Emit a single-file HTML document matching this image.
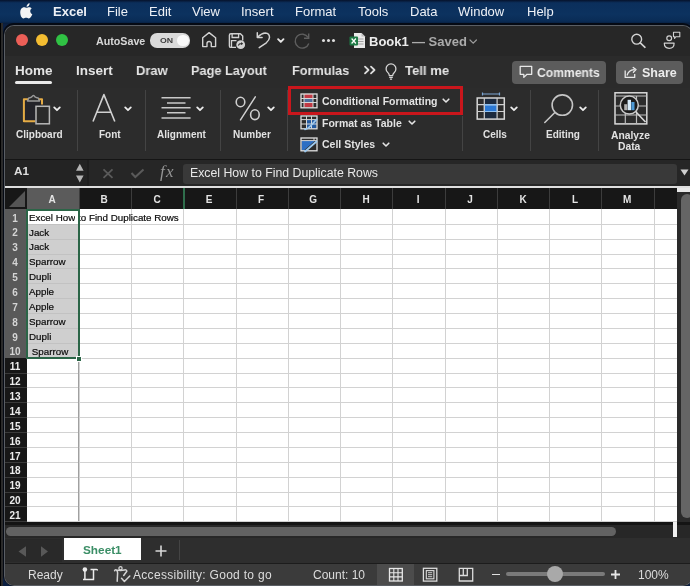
<!DOCTYPE html><html><head><meta charset="utf-8"><style>
*{margin:0;padding:0;box-sizing:border-box}
html,body{width:690px;height:586px;overflow:hidden;background:#0b1f42}
body{position:relative;font-family:"Liberation Sans",sans-serif;color:#e6e6e6}
.a{position:absolute}
.t{position:absolute;white-space:nowrap;line-height:1;will-change:transform}
svg{position:absolute;overflow:visible}
#menubar{left:0;top:0;width:690px;height:24px;background:linear-gradient(#06122b,#0b2f5c 12%,#0c325f 60%,#0a2c56 88%,#081b38)}
#menubar span{will-change:transform;position:absolute;top:5px;font-size:13px;color:#eef1f6;white-space:nowrap;line-height:1}
.tab{font-size:13.5px;font-weight:bold;color:#e4e4e4;top:63.5px}
.rl{font-size:10px;font-weight:bold;color:#e2e2e2;top:130px}
.colh{top:195px;font-size:10px;font-weight:bold;color:#e4e4e4;text-align:center}
.rowh{left:4px;width:22px;font-size:10px;font-weight:bold;color:#e8e8e8;text-align:center;line-height:14.85px;height:14.85px}
.cell{font-size:9.8px;color:#0a0a0a;-webkit-text-stroke:0.2px #0a0a0a;line-height:14.85px;height:14.85px;left:29px}
.st{font-size:12px;color:#dcdcdc;top:569px}
</style></head><body>
<div id="menubar" class="a">
<svg style="left:20.8px;top:2.8px" width="12.6" height="15.6" viewBox="0 0 14 17" preserveAspectRatio="none"><path d="M9.6 0.4c0.1 1-0.3 2-0.9 2.7-0.6 0.7-1.6 1.2-2.5 1.1-0.1-1 0.4-2 1-2.6 0.6-0.7 1.6-1.2 2.4-1.2zM12.6 12.3c-0.4 0.9-0.6 1.3-1.1 2.1-0.7 1.1-1.7 2.4-2.9 2.4-1.1 0-1.4-0.7-2.9-0.7-1.5 0-1.8 0.7-2.9 0.7-1.2 0-2.2-1.2-2.9-2.3C-1.1 11.4-1.3 7.8 0.5 6 1.2 5.1 2.3 4.5 3.4 4.5c1.2 0 1.9 0.7 2.9 0.7 0.9 0 1.5-0.7 2.9-0.7 1 0 2 0.5 2.7 1.4-2.4 1.300-2 4.800 0.700 6.400z" fill="#f4f4f4"/></svg>
<span style="left:53px;font-weight:bold">Excel</span>
<span style="left:107px">File</span>
<span style="left:148.5px">Edit</span>
<span style="left:192px">View</span>
<span style="left:241px">Insert</span>
<span style="left:295px">Format</span>
<span style="left:358px">Tools</span>
<span style="left:410px">Data</span>
<span style="left:458px">Window</span>
<span style="left:527px">Help</span>
</div>
<div class="a" style="left:0;top:23px;width:3px;height:563px;background:#2a2a2a;border-left:1px solid #000"></div>
<div class="a" style="left:3px;top:23px;width:691px;height:563px;border-radius:11px;background:#050a14"></div>
<div class="a" style="left:4px;top:24.5px;width:689px;height:561.5px;border-radius:10px;background:#5a5e64"></div>
<div class="a" style="left:5px;top:26px;width:687px;height:559px;border-radius:9px;background:#2b2b2b;overflow:hidden">
<div class="a" style="left:-5px;top:-26px;width:690px;height:586px">
<div class="a" style="left:0;top:25px;width:690px;height:30.5px;background:#272727"></div>
<div class="a" style="left:0;top:55.5px;width:690px;height:33px;background:#2b2b2b"></div>
<div class="a" style="left:16px;top:34px;width:12px;height:12px;border-radius:50%;background:#ec5f57"></div>
<div class="a" style="left:36px;top:34px;width:12px;height:12px;border-radius:50%;background:#f4bd31"></div>
<div class="a" style="left:56px;top:34px;width:12px;height:12px;border-radius:50%;background:#30c244"></div>
<div class="t" style="left:95.5px;top:35.8px;font-size:10.7px;font-weight:bold;color:#d8d8d8">AutoSave</div>
<div class="a" style="left:149.8px;top:33.4px;width:39.8px;height:14.2px;border-radius:7.1px;background:#dadada"></div>
<div class="t" style="left:159.5px;top:37.3px;font-size:7.6px;font-weight:bold;color:#3c3c3c;transform:scaleX(1.15);transform-origin:left">ON</div>
<div class="a" style="left:177.2px;top:34.6px;width:11.8px;height:11.8px;border-radius:50%;background:#f9f9f9"></div>
<svg style="left:198px;top:29px" width="22" height="21" viewBox="0 0 22 21"><path d="M4.7 8.8 L11.1 3.6 L17.6 8.8 V17.6 H13.3 V14.6 A2.15 2.15 0 0 0 9 14.6 V17.6 H4.7 Z" fill="none" stroke="#d2d2d2" stroke-width="1.4" stroke-linejoin="round"/></svg>
<svg style="left:226px;top:30px" width="22" height="20" viewBox="0 0 22 20"><path d="M10 17.4 H4.9 Q3.4 17.4 3.4 15.9 V5.25 Q3.4 3.75 4.9 3.75 H14.4 L16.7 6 V10.5" fill="none" stroke="#d2d2d2" stroke-width="1.4" stroke-linejoin="round"/><path d="M6.1 3.8 V7.5 H12.6 V3.8 M5.5 17.3 V10.6 H10.5" fill="none" stroke="#d2d2d2" stroke-width="1.3"/><circle cx="14.7" cy="14.7" r="4.4" fill="#d2d2d2"/><path d="M12.3 15.5 Q13.2 13.3 15.8 13.6 M15.2 12.6 L16.3 13.7 L15 14.6" fill="none" stroke="#2b2b2b" stroke-width="1.1"/></svg>
<svg style="left:252px;top:29px" width="22" height="22" viewBox="0 0 22 22"><path d="M5.3 3.8 V8.5 H10.1" fill="none" stroke="#d2d2d2" stroke-width="1.5" stroke-linecap="round" stroke-linejoin="round"/><path d="M5.8 8 Q9.5 4 13.3 3.9 Q17.6 4.2 17.5 8.5 Q17.3 11.2 14.3 13.8 L7.2 18.6" fill="none" stroke="#d2d2d2" stroke-width="1.5" stroke-linecap="round"/></svg>
<svg style="left:277.3px;top:38.2px" width="8" height="6" viewBox="0 0 8 6"><path d="M1.1 1.2 L3.8 3.9 L6.5 1.2" fill="none" stroke="#e6e6e6" stroke-width="1.9" stroke-linecap="round" stroke-linejoin="round"/></svg>
<svg style="left:293px;top:31.5px" width="18" height="18" viewBox="0 0 18 18"><path d="M15.2 5.5 A7 7 0 1 0 15.8 11.5" fill="none" stroke="#5e5e5e" stroke-width="1.4"/><path d="M15.7 1.5 V6.2 H11" fill="none" stroke="#5e5e5e" stroke-width="1.4"/></svg>
<div class="a" style="left:322.1px;top:38.5px;width:3.4px;height:3.4px;border-radius:50%;background:#dedede"></div>
<div class="a" style="left:326.90000000000003px;top:38.5px;width:3.4px;height:3.4px;border-radius:50%;background:#dedede"></div>
<div class="a" style="left:331.7px;top:38.5px;width:3.4px;height:3.4px;border-radius:50%;background:#dedede"></div>
<svg style="left:348.5px;top:31.5px" width="17" height="17" viewBox="0 0 17 17"><path d="M5 1 H12.5 L16 4.5 V16 H5 Z" fill="#e9e9e9"/><path d="M12.5 1 V4.5 H16" fill="#bdbdbd"/><path d="M9 7 H14.5 M9 9.5 H14.5 M9 12 H14.5" stroke="#9a9a9a" stroke-width="0.9"/><rect x="0.5" y="4.5" width="8.5" height="9" rx="1" fill="#1e7a45"/><path d="M2.6 6.5 L6.9 11.5 M6.9 6.5 L2.6 11.5" stroke="#fff" stroke-width="1.2"/></svg>
<div class="t" style="left:369px;top:34.5px;font-size:13px;font-weight:bold;color:#ececec">Book1</div>
<div class="t" style="left:412px;top:34.5px;font-size:13px;font-weight:bold;color:#ababab">— Saved</div>
<svg style="left:469px;top:39px" width="9" height="6" viewBox="0 0 9 6"><path d="M1 1 L4.2 4.2 L7.4 1" fill="none" stroke="#9a9a9a" stroke-width="1.2" stroke-linecap="round"/></svg>
<svg style="left:630px;top:32px" width="17" height="17" viewBox="0 0 17 17"><circle cx="6.7" cy="7.2" r="4.9" fill="none" stroke="#d2d2d2" stroke-width="1.4"/><path d="M10.3 10.8 L15 15.3" stroke="#d2d2d2" stroke-width="1.6" stroke-linecap="round"/></svg>
<svg style="left:663px;top:31px" width="19" height="19" viewBox="0 0 19 19"><circle cx="6.2" cy="7.2" r="2.4" fill="none" stroke="#d2d2d2" stroke-width="1.2"/><path d="M1.3 12.2 H11.1 Q11.1 17.3 6.2 17.3 Q1.3 17.3 1.3 12.2 Z" fill="none" stroke="#d2d2d2" stroke-width="1.2" stroke-linejoin="round"/><path d="M10.5 1.2 H16.8 V5.8 H12.8 L11.6 7.5 L11.6 5.8 H10.5 Z" fill="none" stroke="#d2d2d2" stroke-width="1.1" stroke-linejoin="round"/></svg>
<div class="t tab" style="left:15px">Home</div>
<div class="a" style="left:15px;top:80.5px;width:37px;height:3px;border-radius:2px;background:#e8e8e8"></div>
<div class="t tab" style="left:75.5px">Insert</div>
<div class="t tab" style="left:135.8px;transform:scaleX(0.96);transform-origin:left">Draw</div>
<div class="t tab" style="left:191.2px;transform:scaleX(0.944);transform-origin:left">Page Layout</div>
<div class="t tab" style="left:291.5px;transform:scaleX(0.942);transform-origin:left">Formulas</div>
<div class="t tab" style="left:405px;transform:scaleX(0.97);transform-origin:left">Tell me</div>
<div class="a" style="left:511.5px;top:60.5px;width:94.5px;height:23px;border-radius:4px;background:#5c5c5c"></div>
<div class="t tab" style="left:537px;top:67px;font-size:12.5px;color:#ececec;transform:scaleX(0.97);transform-origin:left">Comments</div>
<div class="a" style="left:615.5px;top:60.5px;width:67px;height:23px;border-radius:4px;background:#5c5c5c"></div>
<div class="t tab" style="left:642px;top:67px;font-size:12.5px;color:#ececec">Share</div>
<svg style="left:362px;top:64px" width="16" height="12" viewBox="0 0 16 12"><path d="M3 2.6 L6.5 6 L3 9.4 M9 2.6 L12.5 6 L9 9.4" fill="none" stroke="#dcdcdc" stroke-width="1.8" stroke-linecap="round" stroke-linejoin="round"/></svg>
<svg style="left:384px;top:63.5px" width="14" height="17" viewBox="0 0 14 17"><path d="M5.3 11.6 Q5.3 9.9 3.7 8.4 A4.9 4.9 0 1 1 10.3 8.4 Q8.7 9.9 8.7 11.6 Z" fill="none" stroke="#d6d6d6" stroke-width="1.3" stroke-linejoin="round"/><path d="M5.2 13.3 H8.8 M5.9 15.2 H8.1" stroke="#d6d6d6" stroke-width="1.3"/></svg>
<svg style="left:518px;top:64px" width="16" height="16" viewBox="0 0 16 16"><path d="M2.2 2.3 H13.7 V10.3 H9 L5.8 13.4 V10.3 H2.2 Z" fill="none" stroke="#e8e8e8" stroke-width="1.3" stroke-linejoin="round"/></svg>
<svg style="left:622px;top:64px" width="17" height="16" viewBox="0 0 17 16"><path d="M3.2 6.5 V13.4 H12.7 V10" fill="none" stroke="#e8e8e8" stroke-width="1.3" stroke-linejoin="round"/><path d="M5.2 11 Q6.5 6.2 12.2 5.6" fill="none" stroke="#e8e8e8" stroke-width="1.3" stroke-linecap="round"/><path d="M11.2 3.4 L14 5.6 L11.4 8.2" fill="none" stroke="#e8e8e8" stroke-width="1.3" stroke-linecap="round" stroke-linejoin="round"/></svg>
<div class="a" style="left:0;top:88px;width:690px;height:70.5px;background:#2c2c2c"></div>
<div class="a" style="left:0;top:158.5px;width:690px;height:1.5px;background:#151515"></div>
<div class="a" style="left:462.3px;top:116px;width:1px;height:35px;background:#444"></div>
<div class="a" style="left:76.5px;top:90px;width:1px;height:61px;background:#444"></div>
<div class="a" style="left:144.7px;top:90px;width:1px;height:61px;background:#444"></div>
<div class="a" style="left:219.6px;top:90px;width:1px;height:61px;background:#444"></div>
<div class="a" style="left:287px;top:90px;width:1px;height:61px;background:#444"></div>
<div class="a" style="left:530px;top:90px;width:1px;height:61px;background:#444"></div>
<div class="a" style="left:598.3px;top:90px;width:1px;height:61px;background:#444"></div>
<div class="t rl" style="left:16px">Clipboard</div>
<div class="t rl" style="left:99px">Font</div>
<div class="t rl" style="left:157px">Alignment</div>
<div class="t rl" style="left:233px">Number</div>
<div class="t rl" style="left:483px">Cells</div>
<div class="t rl" style="left:546px">Editing</div>
<div class="t rl" style="left:611px;top:130.5px;font-size:10.3px">Analyze</div>
<div class="t rl" style="left:618px;top:142px;font-size:10.3px">Data</div>
<div class="t" style="left:322px;top:96px;font-size:10.5px;font-weight:bold;color:#e2e2e2">Conditional Formatting</div>
<div class="t" style="left:322px;top:117.5px;font-size:10.5px;font-weight:bold;color:#e2e2e2">Format as Table</div>
<div class="t" style="left:322px;top:139px;font-size:10.5px;font-weight:bold;color:#e2e2e2">Cell Styles</div>
<svg style="left:53.2px;top:105.8px" width="8" height="7" viewBox="0 0 8 7"><path d="M1.2 1.4 L4 4.2 L6.8 1.4" fill="none" stroke="#ececec" stroke-width="1.8" stroke-linecap="round" stroke-linejoin="round"/></svg>
<svg style="left:124.2px;top:105.8px" width="8" height="7" viewBox="0 0 8 7"><path d="M1.2 1.4 L4 4.2 L6.8 1.4" fill="none" stroke="#ececec" stroke-width="1.8" stroke-linecap="round" stroke-linejoin="round"/></svg>
<svg style="left:195.5px;top:105.8px" width="8" height="7" viewBox="0 0 8 7"><path d="M1.2 1.4 L4 4.2 L6.8 1.4" fill="none" stroke="#ececec" stroke-width="1.8" stroke-linecap="round" stroke-linejoin="round"/></svg>
<svg style="left:267.4px;top:105.8px" width="8" height="7" viewBox="0 0 8 7"><path d="M1.2 1.4 L4 4.2 L6.8 1.4" fill="none" stroke="#ececec" stroke-width="1.8" stroke-linecap="round" stroke-linejoin="round"/></svg>
<svg style="left:510.2px;top:105.8px" width="8" height="7" viewBox="0 0 8 7"><path d="M1.2 1.4 L4 4.2 L6.8 1.4" fill="none" stroke="#ececec" stroke-width="1.8" stroke-linecap="round" stroke-linejoin="round"/></svg>
<svg style="left:578.6px;top:105.8px" width="8" height="7" viewBox="0 0 8 7"><path d="M1.2 1.4 L4 4.2 L6.8 1.4" fill="none" stroke="#ececec" stroke-width="1.8" stroke-linecap="round" stroke-linejoin="round"/></svg>
<svg style="left:20px;top:92px" width="32" height="34" viewBox="0 0 32 34"><path d="M15.3 29.3 H3.9 V7.3 H22 V12.5" fill="#24242a" stroke="#e5ac45" stroke-width="2" stroke-linejoin="round"/><path d="M7.5 9 L8.8 6 Q10.5 5.6 11.8 4.8 Q13.5 2.3 15 4.8 Q16.3 5.6 18.2 6 L19.5 9 Z" fill="#2c2c2c" stroke="#9a9a9a" stroke-width="1.4" stroke-linejoin="round"/><rect x="16" y="14.3" width="13.4" height="17.5" fill="#2a2a2a" stroke="#b8b8b8" stroke-width="1.5"/></svg>
<svg style="left:90px;top:92px" width="28" height="32" viewBox="0 0 28 32"><path d="M3 29.5 L13.9 2.6 L24.8 29.5 M7 20.2 H20.8" fill="none" stroke="#d0d0d0" stroke-width="1.6" stroke-linejoin="round"/></svg>
<svg style="left:160px;top:95px" width="33" height="26" viewBox="0 0 33 26"><path d="M1.5 2.8 H30.6 M7 7.9 H25.5 M1.5 12.7 H30.6 M7 17.8 H25.5 M1.5 23 H30.6" stroke="#c8c8c8" stroke-width="1.5"/></svg>
<svg style="left:232px;top:94px" width="30" height="30" viewBox="0 0 30 30"><ellipse cx="8.5" cy="8" rx="4.3" ry="4.7" fill="none" stroke="#cfcfcf" stroke-width="1.6"/><ellipse cx="22.9" cy="20.7" rx="4.3" ry="4.9" fill="none" stroke="#cfcfcf" stroke-width="1.6"/><path d="M23.3 2.8 L8.5 25.9" stroke="#cfcfcf" stroke-width="1.5" stroke-linecap="round"/></svg>
<svg style="left:300px;top:93px" width="18" height="16" viewBox="0 0 18 16"><rect x="4" y="1" width="9" height="4.5" fill="#c23a45"/><rect x="4" y="5.5" width="9" height="4" fill="#4d6d9c"/><rect x="4" y="9.5" width="9" height="4.5" fill="#c23a45"/><rect x="1" y="1" width="16" height="13.8" fill="none" stroke="#e0e0e0" stroke-width="1.3"/><path d="M4 1 V14.8 M13 1 V14.8 M1 5.5 H17 M1 9.5 H17" stroke="#d6d6d6" stroke-width="1"/></svg>
<svg style="left:300px;top:115px" width="18" height="16" viewBox="0 0 18 16"><rect x="6.5" y="5" width="10" height="8.7" fill="#235aa0"/><rect x="1" y="1" width="16" height="12.8" fill="none" stroke="#e0e0e0" stroke-width="1.3"/><path d="M6.5 1 V13.8 M11.5 1 V13.8 M1 4.6 H17 M1 9 H17" stroke="#d6d6d6" stroke-width="1"/><path d="M5 14.3 Q8 14 10.5 11 L16.5 4.5" fill="none" stroke="#9cc8ee" stroke-width="1.8" stroke-linecap="round"/></svg>
<svg style="left:300px;top:137px" width="18" height="16" viewBox="0 0 18 16"><path d="M1.7 3.8 H15 L3.8 13.4 H1.7 Z" fill="#2d6fc4"/><rect x="1" y="1" width="16" height="12.8" fill="none" stroke="#e0e0e0" stroke-width="1.3"/><path d="M1 3.6 H17 M14 1 V3.6" stroke="#d6d6d6" stroke-width="1"/><path d="M5 14.5 L16.5 4.5" fill="none" stroke="#9cc8ee" stroke-width="1.8" stroke-linecap="round"/></svg>
<svg style="left:442.3px;top:98.3px" width="8" height="6" viewBox="0 0 8 6"><path d="M1.2 1.2 L4 4 L6.8 1.2" fill="none" stroke="#e4e4e4" stroke-width="1.6" stroke-linecap="round" stroke-linejoin="round"/></svg>
<svg style="left:407.8px;top:120px" width="8" height="6" viewBox="0 0 8 6"><path d="M1.2 1.2 L4 4 L6.8 1.2" fill="none" stroke="#e4e4e4" stroke-width="1.6" stroke-linecap="round" stroke-linejoin="round"/></svg>
<svg style="left:381.5px;top:141.6px" width="8" height="6" viewBox="0 0 8 6"><path d="M1.2 1.2 L4 4 L6.8 1.2" fill="none" stroke="#e4e4e4" stroke-width="1.6" stroke-linecap="round" stroke-linejoin="round"/></svg>
<svg style="left:475px;top:91px" width="32" height="30" viewBox="0 0 32 30"><rect x="9.3" y="7" width="12.8" height="21" fill="#1b2a3e"/><rect x="9.3" y="13.7" width="13" height="6.8" fill="#2a78d4" stroke="#8fc0f0" stroke-width="1"/><path d="M7.5 3 H24.5 M7.5 1.5 V4.5 M24.5 1.5 V4.5" stroke="#7da6d4" stroke-width="1.2"/><rect x="2.2" y="7" width="27.1" height="21.1" fill="none" stroke="#d8d8d8" stroke-width="1.5"/><path d="M9.3 7 V28.1 M22.1 7 V28.1 M2.2 13.7 H29.3 M2.2 20.5 H29.3" stroke="#cfcfcf" stroke-width="1.2"/><path d="M9.3 13.7 H22.1 M9.3 20.5 H22.1" stroke="#8fc0f0" stroke-width="1.2"/></svg>
<svg style="left:542px;top:92px" width="34" height="34" viewBox="0 0 34 34"><circle cx="20.3" cy="13.1" r="10.2" fill="none" stroke="#c4c4c4" stroke-width="1.6"/><path d="M12.6 20.7 L2.8 30.5" stroke="#c4c4c4" stroke-width="1.6" stroke-linecap="round"/></svg>
<svg style="left:613px;top:91px" width="36" height="35" viewBox="0 0 36 35"><rect x="2" y="1.8" width="31.8" height="31.1" fill="none" stroke="#dadada" stroke-width="1.5"/><path d="M2 5 H33.8 M2 15 H33.8 M2 24 H33.8 M12.3 5 V33 M23.5 5 V33" stroke="#bdbdbd" stroke-width="1.2"/><path d="M23 21 L32.5 31" stroke="#dadada" stroke-width="1.6"/><circle cx="16.3" cy="14.1" r="9" fill="#1c1c1c" stroke="#c8c8c8" stroke-width="1.5"/><rect x="11.2" y="13.2" width="3" height="6" fill="#b0b0b0"/><rect x="14.6" y="8.8" width="3.4" height="10.4" fill="#d8ecfa"/><rect x="18.3" y="11" width="3.2" height="8.2" fill="#4d9ad6"/></svg>
<div class="a" style="left:287.6px;top:85.8px;width:175.6px;height:29.3px;border:3.5px solid #c9161c"></div>
<div class="a" style="left:0;top:160px;width:690px;height:25.5px;background:#262626"></div>
<div class="a" style="left:0;top:160px;width:87px;height:25.5px;background:#232323"></div>
<div class="a" style="left:87px;top:160px;width:1.5px;height:25.5px;background:#1e1e1e"></div>
<div class="t" style="left:14px;top:166.4px;font-size:11.8px;font-weight:bold;color:#dedede">A1</div>
<div class="a" style="left:183px;top:163.5px;width:494px;height:20.5px;border-radius:3px;background:#393939"></div>
<div class="t" style="left:189.5px;top:166.5px;font-size:12.3px;color:#e8e8e8">Excel How to Find Duplicate Rows</div>
<svg style="left:75px;top:162px" width="10" height="22" viewBox="0 0 10 22"><path d="M1 8.7 L4.8 1.7 L8.6 8.7 Z M1 13.4 L8.6 13.4 L4.8 20.4 Z" fill="#b4b4b4"/></svg>
<svg style="left:102px;top:167.5px" width="12" height="11" viewBox="0 0 12 11"><path d="M1.5 1.3 L10.5 9.8 M10.5 1.3 L1.5 9.8" stroke="#5a5a5a" stroke-width="1.8"/></svg>
<svg style="left:129.5px;top:167.5px" width="15" height="11" viewBox="0 0 15 11"><path d="M1.5 5 L5.3 9 L13.5 1.5" fill="none" stroke="#5a5a5a" stroke-width="2"/></svg>
<div class="t" style="left:160px;top:163.2px;font-family:'Liberation Serif',serif;font-style:italic;font-size:17px;letter-spacing:1.2px;color:#959595">fx</div>
<svg style="left:680px;top:169px" width="9" height="7" viewBox="0 0 9 7"><path d="M0.5 0.5 H8.5 L4.5 6.5 Z" fill="#d0d0d0"/></svg>
<div class="a" style="left:0;top:185.5px;width:690px;height:2.5px;background:#dedede"></div>
<div class="a" style="left:5px;top:188px;width:672px;height:20.7px;background:#171717"></div>
<svg style="left:5px;top:188px" width="22" height="21"><polygon points="20,3 20,19 4,19" fill="#555"/></svg>
<div class="a" style="left:26.9px;top:188px;width:52.3px;height:20.7px;background:#5b5b5b"></div>
<div class="t colh" style="left:26.1px;width:52.3px">A</div>
<div class="t colh" style="left:78.4px;width:52.3px">B</div>
<div class="a" style="left:78.7px;top:188px;width:1px;height:20.7px;background:#3c3c3c"></div>
<div class="t colh" style="left:130.6px;width:52.3px">C</div>
<div class="a" style="left:130.9px;top:188px;width:1px;height:20.7px;background:#3c3c3c"></div>
<div class="t colh" style="left:182.9px;width:52.3px">E</div>
<div class="a" style="left:182.7px;top:188px;width:2px;height:20.7px;background:#2f6e4c"></div>
<div class="t colh" style="left:235.2px;width:52.3px">F</div>
<div class="a" style="left:235.5px;top:188px;width:1px;height:20.7px;background:#3c3c3c"></div>
<div class="t colh" style="left:287.4px;width:52.3px">G</div>
<div class="a" style="left:287.8px;top:188px;width:1px;height:20.7px;background:#3c3c3c"></div>
<div class="t colh" style="left:339.7px;width:52.3px">H</div>
<div class="a" style="left:340.0px;top:188px;width:1px;height:20.7px;background:#3c3c3c"></div>
<div class="t colh" style="left:392.0px;width:52.3px">I</div>
<div class="a" style="left:392.3px;top:188px;width:1px;height:20.7px;background:#3c3c3c"></div>
<div class="t colh" style="left:444.3px;width:52.3px">J</div>
<div class="a" style="left:444.6px;top:188px;width:1px;height:20.7px;background:#3c3c3c"></div>
<div class="t colh" style="left:496.5px;width:52.3px">K</div>
<div class="a" style="left:496.8px;top:188px;width:1px;height:20.7px;background:#3c3c3c"></div>
<div class="t colh" style="left:548.8px;width:52.3px">L</div>
<div class="a" style="left:549.1px;top:188px;width:1px;height:20.7px;background:#3c3c3c"></div>
<div class="t colh" style="left:601.1px;width:52.3px">M</div>
<div class="a" style="left:601.4px;top:188px;width:1px;height:20.7px;background:#3c3c3c"></div>
<div class="a" style="left:653.6px;top:188px;width:1px;height:20.7px;background:#3c3c3c"></div>
<div class="a" style="left:5px;top:208.7px;width:22px;height:313.3px;background:#171717"></div>
<div class="a" style="left:5px;top:208.7px;width:22px;height:149.50px;background:#595959"></div>
<div class="t rowh" style="top:211.60px;color:#d4d4d4">1</div>
<div class="t rowh" style="top:226.47px;color:#d4d4d4">2</div>
<div class="t rowh" style="top:241.34px;color:#d4d4d4">3</div>
<div class="t rowh" style="top:256.21px;color:#d4d4d4">4</div>
<div class="t rowh" style="top:271.08px;color:#d4d4d4">5</div>
<div class="t rowh" style="top:285.95px;color:#d4d4d4">6</div>
<div class="t rowh" style="top:300.82px;color:#d4d4d4">7</div>
<div class="t rowh" style="top:315.69px;color:#d4d4d4">8</div>
<div class="t rowh" style="top:330.56px;color:#d4d4d4">9</div>
<div class="t rowh" style="top:345.43px;color:#d4d4d4">10</div>
<div class="t rowh" style="top:360.30px;color:#ededed">11</div>
<div class="a" style="left:5px;top:372.57px;width:22px;height:1px;background:#3a3a3a"></div>
<div class="t rowh" style="top:375.17px;color:#ededed">12</div>
<div class="a" style="left:5px;top:387.44px;width:22px;height:1px;background:#3a3a3a"></div>
<div class="t rowh" style="top:390.04px;color:#ededed">13</div>
<div class="a" style="left:5px;top:402.31px;width:22px;height:1px;background:#3a3a3a"></div>
<div class="t rowh" style="top:404.91px;color:#ededed">14</div>
<div class="a" style="left:5px;top:417.18px;width:22px;height:1px;background:#3a3a3a"></div>
<div class="t rowh" style="top:419.78px;color:#ededed">15</div>
<div class="a" style="left:5px;top:432.05px;width:22px;height:1px;background:#3a3a3a"></div>
<div class="t rowh" style="top:434.65px;color:#ededed">16</div>
<div class="a" style="left:5px;top:446.92px;width:22px;height:1px;background:#3a3a3a"></div>
<div class="t rowh" style="top:449.52px;color:#ededed">17</div>
<div class="a" style="left:5px;top:461.79px;width:22px;height:1px;background:#3a3a3a"></div>
<div class="t rowh" style="top:464.39px;color:#ededed">18</div>
<div class="a" style="left:5px;top:476.66px;width:22px;height:1px;background:#3a3a3a"></div>
<div class="t rowh" style="top:479.26px;color:#ededed">19</div>
<div class="a" style="left:5px;top:491.53px;width:22px;height:1px;background:#3a3a3a"></div>
<div class="t rowh" style="top:494.13px;color:#ededed">20</div>
<div class="a" style="left:5px;top:506.40px;width:22px;height:1px;background:#3a3a3a"></div>
<div class="t rowh" style="top:509.00px;color:#ededed">21</div>
<div class="a" style="left:5px;top:521.27px;width:22px;height:1px;background:#3a3a3a"></div>
<div class="a" style="left:27px;top:208.7px;width:650px;height:313.3px;background:#fff"></div>
<div class="a" style="left:27px;top:224.37px;width:52px;height:133.83px;background:#cfcfcf"></div>
<div class="a" style="left:27px;top:223.87px;width:650px;height:1px;background:#d2d2d2"></div>
<div class="a" style="left:27px;top:223.87px;width:52px;height:1px;background:#c2c2c2"></div>
<div class="a" style="left:27px;top:238.74px;width:650px;height:1px;background:#d2d2d2"></div>
<div class="a" style="left:27px;top:238.74px;width:52px;height:1px;background:#c2c2c2"></div>
<div class="a" style="left:27px;top:253.61px;width:650px;height:1px;background:#d2d2d2"></div>
<div class="a" style="left:27px;top:253.61px;width:52px;height:1px;background:#c2c2c2"></div>
<div class="a" style="left:27px;top:268.48px;width:650px;height:1px;background:#d2d2d2"></div>
<div class="a" style="left:27px;top:268.48px;width:52px;height:1px;background:#c2c2c2"></div>
<div class="a" style="left:27px;top:283.35px;width:650px;height:1px;background:#d2d2d2"></div>
<div class="a" style="left:27px;top:283.35px;width:52px;height:1px;background:#c2c2c2"></div>
<div class="a" style="left:27px;top:298.22px;width:650px;height:1px;background:#d2d2d2"></div>
<div class="a" style="left:27px;top:298.22px;width:52px;height:1px;background:#c2c2c2"></div>
<div class="a" style="left:27px;top:313.09px;width:650px;height:1px;background:#d2d2d2"></div>
<div class="a" style="left:27px;top:313.09px;width:52px;height:1px;background:#c2c2c2"></div>
<div class="a" style="left:27px;top:327.96px;width:650px;height:1px;background:#d2d2d2"></div>
<div class="a" style="left:27px;top:327.96px;width:52px;height:1px;background:#c2c2c2"></div>
<div class="a" style="left:27px;top:342.83px;width:650px;height:1px;background:#d2d2d2"></div>
<div class="a" style="left:27px;top:342.83px;width:52px;height:1px;background:#c2c2c2"></div>
<div class="a" style="left:27px;top:357.70px;width:650px;height:1px;background:#d2d2d2"></div>
<div class="a" style="left:27px;top:372.57px;width:650px;height:1px;background:#d2d2d2"></div>
<div class="a" style="left:27px;top:387.44px;width:650px;height:1px;background:#d2d2d2"></div>
<div class="a" style="left:27px;top:402.31px;width:650px;height:1px;background:#d2d2d2"></div>
<div class="a" style="left:27px;top:417.18px;width:650px;height:1px;background:#d2d2d2"></div>
<div class="a" style="left:27px;top:432.05px;width:650px;height:1px;background:#d2d2d2"></div>
<div class="a" style="left:27px;top:446.92px;width:650px;height:1px;background:#d2d2d2"></div>
<div class="a" style="left:27px;top:461.79px;width:650px;height:1px;background:#d2d2d2"></div>
<div class="a" style="left:27px;top:476.66px;width:650px;height:1px;background:#d2d2d2"></div>
<div class="a" style="left:27px;top:491.53px;width:650px;height:1px;background:#d2d2d2"></div>
<div class="a" style="left:27px;top:506.40px;width:650px;height:1px;background:#d2d2d2"></div>
<div class="a" style="left:27px;top:521.27px;width:650px;height:1px;background:#d2d2d2"></div>
<div class="a" style="left:78.7px;top:208.7px;width:1px;height:313.3px;background:#d2d2d2"></div>
<div class="a" style="left:130.9px;top:208.7px;width:1px;height:313.3px;background:#d2d2d2"></div>
<div class="a" style="left:183.2px;top:208.7px;width:1px;height:313.3px;background:#d2d2d2"></div>
<div class="a" style="left:235.5px;top:208.7px;width:1px;height:313.3px;background:#d2d2d2"></div>
<div class="a" style="left:287.8px;top:208.7px;width:1px;height:313.3px;background:#d2d2d2"></div>
<div class="a" style="left:340.0px;top:208.7px;width:1px;height:313.3px;background:#d2d2d2"></div>
<div class="a" style="left:392.3px;top:208.7px;width:1px;height:313.3px;background:#d2d2d2"></div>
<div class="a" style="left:444.6px;top:208.7px;width:1px;height:313.3px;background:#d2d2d2"></div>
<div class="a" style="left:496.8px;top:208.7px;width:1px;height:313.3px;background:#d2d2d2"></div>
<div class="a" style="left:549.1px;top:208.7px;width:1px;height:313.3px;background:#d2d2d2"></div>
<div class="a" style="left:601.4px;top:208.7px;width:1px;height:313.3px;background:#d2d2d2"></div>
<div class="a" style="left:653.6px;top:208.7px;width:1px;height:313.3px;background:#d2d2d2"></div>
<div class="a" style="left:78.2px;top:360.20px;width:1px;height:161.30px;background:#a0a0a0"></div>
<div class="t cell" style="top:210.70px">Excel How to Find Duplicate Rows</div>
<div class="t cell" style="top:225.57px">Jack</div>
<div class="t cell" style="top:240.44px">Jack</div>
<div class="t cell" style="top:255.31px">Sparrow</div>
<div class="t cell" style="top:270.18px">Dupli</div>
<div class="t cell" style="top:285.05px">Apple</div>
<div class="t cell" style="top:299.92px">Apple</div>
<div class="t cell" style="top:314.79px">Sparrow</div>
<div class="t cell" style="top:329.66px">Dupli</div>
<div class="t cell" style="top:344.53px">&nbsp;Sparrow</div>
<div class="a" style="left:74.5px;top:210px;width:3px;height:14px;background:#fff"></div>
<div class="a" style="left:25.8px;top:209px;width:54.3px;height:150.40px;border:2px solid #2b6547"></div>
<div class="a" style="left:75.5px;top:355.70px;width:6px;height:6px;background:#2b6547;border:1px solid #fff"></div>
<div class="a" style="left:677px;top:188px;width:13px;height:334px;background:#2a2a2a"></div>
<div class="a" style="left:677px;top:188px;width:13px;height:3.5px;background:#e8e8e8"></div>
<div class="a" style="left:681px;top:194px;width:12px;height:324px;border-radius:6px;background:#656565"></div>
<div class="a" style="left:0;top:522px;width:690px;height:15.5px;background:#272727;border-top:3px solid #141414"></div>
<div class="a" style="left:6px;top:526.5px;width:610px;height:9px;border-radius:5px;background:#626262"></div>
<div class="a" style="left:673px;top:522px;width:4px;height:15px;background:#f0f0f0"></div>
<div class="a" style="left:0;top:537.5px;width:690px;height:25px;background:#2e2e2e"></div>
<div class="a" style="left:64px;top:537.5px;width:77px;height:22px;background:#fff"></div>
<div class="t" style="left:82.6px;top:544.5px;font-size:11.8px;font-weight:bold;color:#3b8e66">Sheet1</div>
<div class="a" style="left:179px;top:540px;width:1px;height:20px;background:#444"></div>
<div class="a" style="left:0;top:562.5px;width:690px;height:24px;background:#3b3b3b;border-top:1px solid #1c1c1c"></div>
<div class="a" style="left:377.3px;top:563.5px;width:36.5px;height:23px;background:#4c4c4c"></div>
<div class="t st" style="left:28px">Ready</div>
<div class="t st" style="left:132.5px;letter-spacing:0.3px">Accessibility: Good to go</div>
<div class="t st" style="left:313px">Count: 10</div>
<div class="t st" style="left:637.5px">100%</div>
<div class="a" style="left:506px;top:572px;width:99px;height:4px;border-radius:2px;background:#7a7a7a"></div>
<div class="a" style="left:546.5px;top:566px;width:16px;height:16px;border-radius:50%;background:#a9a9a9"></div>
<div class="a" style="left:5px;top:539px;width:57px;height:23px;background:#292929"></div>
<svg style="left:17px;top:545px" width="34" height="13" viewBox="0 0 34 13"><path d="M9 1.3 L1.5 6.5 L9 11.7 Z M24 1.3 L31 6.5 L24 11.7 Z" fill="#585858"/></svg>
<svg style="left:154px;top:544px" width="14" height="14" viewBox="0 0 14 14"><path d="M7 1.5 V12.5 M1.5 7 H12.5" stroke="#d8d8d8" stroke-width="1.6"/></svg>
<svg style="left:80px;top:566px" width="20" height="17" viewBox="0 0 20 17"><circle cx="4.9" cy="3.5" r="2.3" fill="#ececec"/><path d="M4.9 4 V13.5 M3 13.5 H14.2 M10.5 3.5 H16.5 Q17.5 3.5 17.2 4.5 M13.5 3.5 V13.5" fill="none" stroke="#ececec" stroke-width="1.5"/></svg>
<svg style="left:110px;top:564px" width="24" height="20" viewBox="0 0 24 20"><circle cx="10.5" cy="4.3" r="1.6" fill="none" stroke="#d4d4d4" stroke-width="1.3"/><path d="M4.6 6.8 Q5 5.4 6.5 5.9 L10.5 6.6 L14.5 5.9 Q16.8 5.6 16.8 7.2 L13.7 11.5 M6.5 6.4 Q7.8 7.2 7.6 9 L7.2 17.2" fill="none" stroke="#d4d4d4" stroke-width="1.5" stroke-linecap="round" stroke-linejoin="round"/><path d="M11.5 14.3 L14.4 17.5 L19.8 12" fill="none" stroke="#d4d4d4" stroke-width="1.5" stroke-linecap="round" stroke-linejoin="round"/></svg>
<svg style="left:388px;top:567px" width="16" height="16" viewBox="0 0 16 16"><rect x="1.5" y="1.5" width="12.8" height="12.5" fill="none" stroke="#e8e8e8" stroke-width="1.3"/><path d="M5.8 1.5 V14 M10 1.5 V14 M1.5 5.7 H14.3 M1.5 9.9 H14.3" stroke="#e8e8e8" stroke-width="1.1"/></svg>
<svg style="left:422px;top:567px" width="16" height="16" viewBox="0 0 16 16"><rect x="1.4" y="1.3" width="13.4" height="12.8" fill="none" stroke="#dcdcdc" stroke-width="1.3"/><rect x="4.3" y="3.6" width="7.6" height="8.2" fill="none" stroke="#dcdcdc" stroke-width="1.1"/><path d="M6 5.7 H10.2 M6 7.7 H10.2 M6 9.7 H10.2" stroke="#dcdcdc" stroke-width="0.9"/></svg>
<svg style="left:457.5px;top:567px" width="16" height="16" viewBox="0 0 16 16"><path d="M1.3 1.3 H14.7 V14 H1.3 Z M1.3 8.5 H9.3 V1.3 M5.3 1.3 V8.5" fill="none" stroke="#dcdcdc" stroke-width="1.3"/></svg>
<div class="a" style="left:492px;top:573.5px;width:7.5px;height:1.8px;background:#e0e0e0"></div>
<svg style="left:610px;top:568.5px" width="11" height="11" viewBox="0 0 11 11"><path d="M5.5 1 V10 M1 5.5 H10" stroke="#e6e6e6" stroke-width="1.8"/></svg>
</div></div>
</body></html>
